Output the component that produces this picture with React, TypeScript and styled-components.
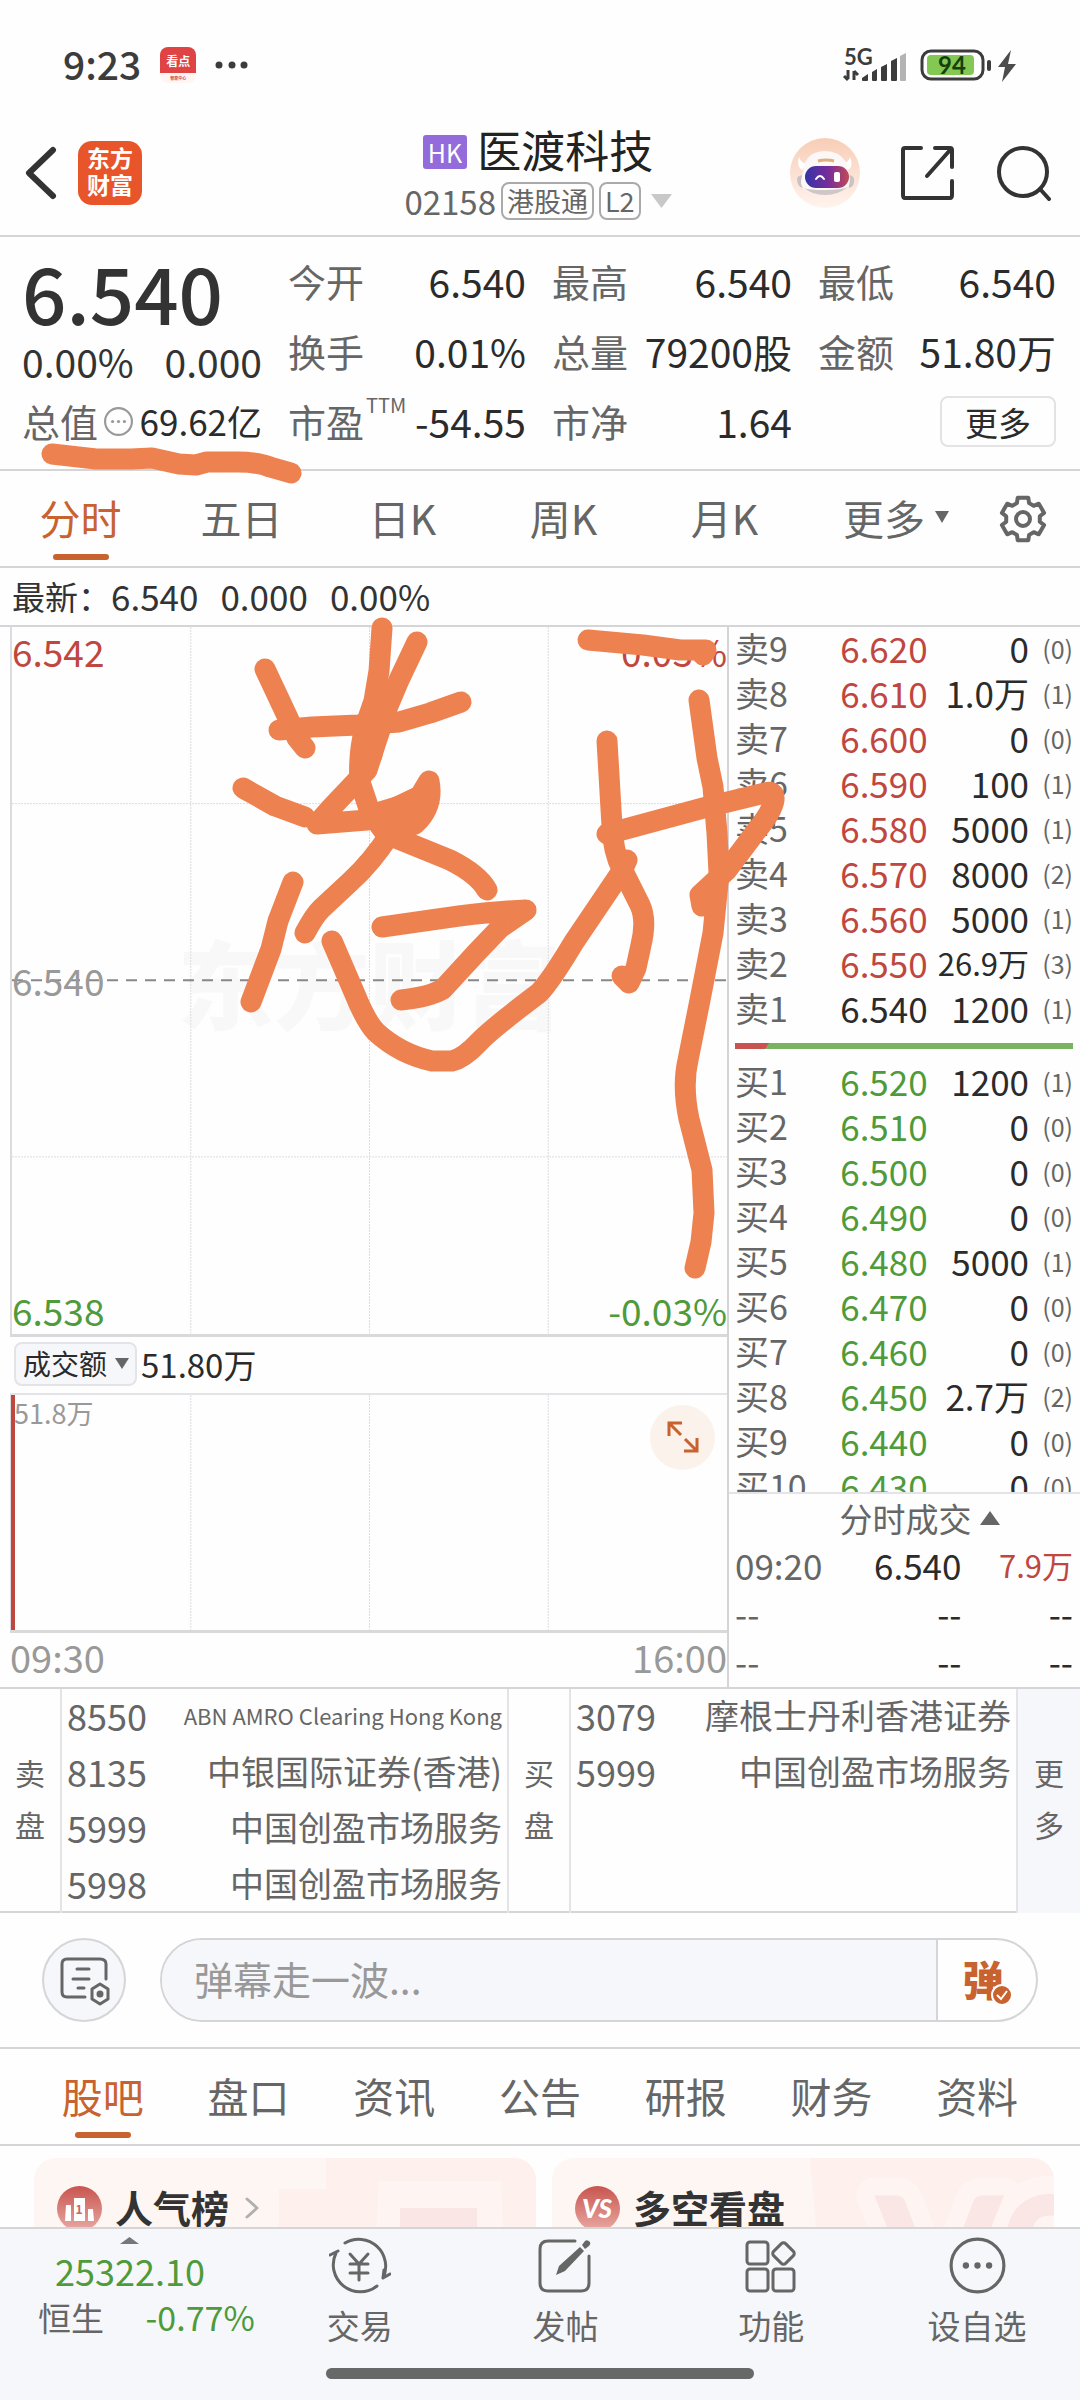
import React from "react";
import styled, { createGlobalStyle, css } from "styled-components";

const color = {
  ink: "#2b2b2b",
  grey: "#666666",
  mute: "#999999",
  line: "#d5d5d8",
  soft: "#e4e4e8",
  panel: "#f6f7fa",
  accent: "#c8622f",
  red: "#bf4740",
  green: "#4f9a3a",
  pen: "#ee8150",
};

const Global = createGlobalStyle`
  *, *::before, *::after { box-sizing: border-box; }
  body {
    margin: 0;
    background: #fefefe;
    color: ${color.ink};
    font-family: "Noto Sans CJK SC", "Noto Sans", sans-serif;
  }
  button, input, select { font: inherit; color: inherit; margin: 0; padding: 0; border: 0; background: none; }
  dl, dd, h1, h2, p { margin: 0; font-weight: 400; }
  table { border-collapse: collapse; width: 100%; table-layout: fixed; }
  td, th { padding: 0 0 4px; font-weight: 400; text-align: left; white-space: nowrap; }
  svg { display: block; flex: none; }
`;

const Page = styled.div`
  position: relative;
  display: flex;
  flex-direction: column;
  height: 100vh;
  min-height: 2400px;
  overflow: hidden;
`;

const Content = styled.main`
  flex: 1;
  min-height: 0;
  overflow: hidden;
`;

/* ---------- status bar ---------- */
const StatusBar = styled.div`
  display: flex;
  justify-content: space-between;
  align-items: center;
  height: 110px;
  padding: 20px 62px 0 63px;
`;
const StatusGroup = styled.div<{ $gap: number }>`
  display: flex;
  align-items: center;
  gap: ${(p) => p.$gap}px;
`;
const Clock = styled.span`
  padding-bottom: 4px;
  font-size: 39px;
  line-height: 44px;
  font-weight: 500;
  color: #3c3c3c;
`;
const NewsBadge = styled.span`
  display: flex;
  flex-direction: column;
  align-items: center;
  width: 36px;
  height: 36px;
  border-radius: 8px;
  overflow: hidden;
  background: linear-gradient(#e04343 0 26px, #fff5f3 26px);
  color: #fff;
  font-size: 12px;
  line-height: 28px;
  font-weight: 700;
`;
const NewsCaption = styled.span`
  font-size: 4px;
  line-height: 6px;
  color: #d04a44;
`;

/* ---------- header ---------- */
const Header = styled.header`
  display: grid;
  grid-template-columns: 1fr auto 1fr;
  align-items: center;
  height: 127px;
  padding: 0 28px 0 24px;
  border-bottom: 2px solid ${color.line};
`;
const HeaderSide = styled.div<{ $end?: boolean }>`
  display: flex;
  align-items: center;
  gap: ${(p) => (p.$end ? 40 : 20)}px;
  justify-content: ${(p) => (p.$end ? "flex-end" : "flex-start")};
`;
const IconButton = styled.button`
  display: flex;
  align-items: center;
  justify-content: center;
  cursor: pointer;
`;
const Brand = styled.a`
  display: flex;
  align-items: center;
  justify-content: center;
  width: 64px;
  height: 64px;
  border-radius: 14px;
  background: #e8552a;
  color: #fff;
  font-size: 23px;
  line-height: 27px;
  font-weight: 700;
  text-align: center;
  text-decoration: none;
  word-break: break-all;
  padding: 0 9px 4px;
`;
const TitleBlock = styled.div`
  display: flex;
  flex-direction: column;
  align-items: center;
  gap: 4px;
`;
const TitleRow = styled.div`
  display: flex;
  align-items: center;
  gap: 10px;
`;
const MarketBadge = styled.span`
  margin-top: 6px;
  padding: 0 5px;
  border-radius: 3px;
  background: #946bdb;
  color: #fff;
  font-size: 25px;
  line-height: 34px;
`;
const StockName = styled.h1`
  font-size: 44px;
  line-height: 52px;
  color: #222;
`;
const CodeRow = styled.div`
  display: flex;
  align-items: center;
  gap: 5px;
  color: ${color.grey};
  font-size: 33px;
  line-height: 44px;
`;
const CodeCaret = styled.span`
  padding-left: 5px;
`;
const Tag = styled.span`
  padding: 0 4px;
  border: 2px solid #aaa;
  border-radius: 8px;
  font-size: 27px;
  line-height: 34px;
`;

/* ---------- quote ---------- */
const Quote = styled.section`
  display: grid;
  grid-template-columns: 240fr 238fr 240fr 238fr;
  column-gap: 26px;
  height: 234px;
  padding: 9px 24px 0 22px;
  border-bottom: 2px solid ${color.line};
`;
const PriceColumn = styled.div`
  display: flex;
  flex-direction: column;
`;
const LastPrice = styled.p`
  font-size: 78px;
  line-height: 90px;
  font-weight: 500;
  color: #333;
`;
const Change = styled.p`
  display: flex;
  justify-content: space-between;
  font-size: 39px;
  line-height: 50px;
  color: #333;
`;
const StatColumn = styled.dl`
  display: flex;
  flex-direction: column;
`;
const Stat = styled.div`
  display: flex;
  justify-content: space-between;
  align-items: center;
  height: 70px;
  white-space: nowrap;
`;
const StatName = styled.dt`
  display: flex;
  font-size: 38px;
  line-height: 56px;
  color: ${color.grey};
`;
const StatValue = styled.dd`
  font-size: 39px;
  line-height: 56px;
`;
const CapRow = styled.dl`
  display: flex;
  align-items: center;
  justify-content: space-between;
  height: 70px;
  white-space: nowrap;
`;
const CapValue = styled.dd`
  font-size: 35px;
  line-height: 56px;
`;
const Sup = styled.sup`
  font-size: 20px;
  line-height: 24px;
  margin-left: 2px;
`;
const MoreButton = styled.button`
  align-self: flex-end;
  width: 116px;
  height: 51px;
  margin-top: 10px;
  border: 2px solid #e3e3e6;
  border-radius: 8px;
  font-size: 33px;
  line-height: 40px;
`;

/* ---------- tabs ---------- */
const PeriodTabs = styled.nav`
  display: grid;
  grid-template-columns: repeat(5, 161fr) 182fr 93fr;
  height: 97px;
  border-bottom: 2px solid ${color.line};
`;
const SectionTabs = styled(PeriodTabs)`
  grid-template-columns: repeat(7, 1fr);
  padding: 0 30px;
`;
const Tab = styled.button<{ $on?: boolean }>`
  position: relative;
  display: flex;
  align-items: center;
  justify-content: center;
  gap: 10px;
  padding-bottom: 4px;
  font-size: 41px;
  line-height: 56px;
  color: ${color.grey};
  white-space: nowrap;
  ${(p) =>
    p.$on &&
    css`
      color: ${color.accent};
      &::after {
        content: "";
        position: absolute;
        bottom: 6px;
        width: 56px;
        height: 6px;
        border-radius: 3px;
        background: ${color.accent};
      }
    `}
`;
const SettingsButton = styled(IconButton)`
  justify-content: flex-start;
  padding-left: 12px;
`;
const Latest = styled.p`
  display: flex;
  gap: 22px;
  height: 59px;
  padding-left: 12px;
  border-bottom: 2px solid ${color.line};
  font-size: 35px;
  line-height: 56px;
  color: #333;
`;
const LatestLabel = styled.span`
  margin-right: -22px;
  font-size: 33px;
`;

/* ---------- market area ---------- */
const Market = styled.section`
  display: grid;
  grid-template-columns: 729fr 351fr;
  border-bottom: 2px solid ${color.line};
`;
const Charts = styled.div`
  display: flex;
  flex-direction: column;
  padding-left: 10px;
  border-right: 2px solid ${color.line};
`;
const Plot = styled.div<{ $grow: number; $edge: string }>`
  position: relative;
  flex: ${(p) => p.$grow} 1 0;
  display: flex;
  flex-direction: column;
  justify-content: space-between;
  border-left: 2px solid ${(p) => p.$edge};
  border-bottom: 3px solid #d9d9dc;
`;
const Canvas = styled.svg`
  position: absolute;
  inset: 0;
  width: 100%;
  height: 100%;
`;
const Watermark = styled.span`
  position: absolute;
  inset: 0;
  display: flex;
  align-items: center;
  justify-content: center;
  font-size: 96px;
  font-weight: 900;
  color: #f8f8f9;
`;
const Scale = styled.div<{ $tone: string }>`
  position: relative;
  display: flex;
  justify-content: space-between;
  font-size: 37px;
  line-height: 48px;
  color: ${(p) => p.$tone};
`;
const VolumeHead = styled.div`
  display: flex;
  align-items: center;
  gap: 4px;
  height: 58px;
  padding: 0 0 2px 4px;
  border-bottom: 2px solid ${color.soft};
  font-size: 33px;
  line-height: 40px;
`;
const PickerLabel = styled.label`
  position: relative;
  display: flex;
  align-items: center;
`;
const Picker = styled.select`
  appearance: none;
  width: 123px;
  height: 44px;
  padding: 0 28px 2px 7px;
  border: 2px solid ${color.soft};
  border-radius: 8px;
  background: ${color.panel};
  font-size: 28px;
  line-height: 38px;
`;
const PickerCaret = styled.svg`
  position: absolute;
  right: 8px;
  pointer-events: none;
`;
const VolumeMax = styled.span`
  position: relative;
  padding-left: 2px;
  font-size: 27px;
  line-height: 36px;
  color: ${color.mute};
`;
const VolumeBar = styled.span`
  position: absolute;
  left: -1px;
  top: 0;
  bottom: 0;
  width: 4px;
  background: ${color.red};
`;
const Expand = styled.button`
  position: absolute;
  top: 10px;
  right: 12px;
  display: flex;
  align-items: center;
  justify-content: center;
  width: 65px;
  height: 65px;
  border-radius: 50%;
  background: #fcf2ec;
`;
const Axis = styled.div`
  display: flex;
  justify-content: space-between;
  height: 54px;
  font-size: 38px;
  line-height: 48px;
  color: ${color.mute};
`;

/* ---------- order book ---------- */
const Book = styled.div`
  padding: 0 7px 0 6px;
`;
const BookTable = styled.table`
  & tr { height: 45px; }
`;
const Clip = styled.div`
  height: 432px;
  overflow: hidden;
`;
const Level = styled.th`
  width: 26%;
  font-size: 34px;
  line-height: 40px;
  color: ${color.grey};
`;
const Num = styled.td<{ $tone?: string; $w: number; $long?: boolean }>`
  && { text-align: right; }
  width: ${(p) => p.$w}%;
  font-size: ${(p) => (p.$long ? 31 : 35)}px;
  line-height: 40px;
  color: ${(p) => p.$tone ?? color.ink};
`;
const Count = styled.td`
  && { text-align: right; }
  width: 13%;
  font-size: 25px;
  line-height: 40px;
  color: ${color.grey};
`;
const Balance = styled.div`
  height: 6px;
  margin: 11px 0;
  background: linear-gradient(125deg, #c75450 0 10%, #7ab35f 10%);
`;
const TradesToggle = styled.button`
  display: flex;
  align-items: center;
  justify-content: center;
  gap: 8px;
  width: calc(100% + 13px);
  height: 51px;
  margin: 0 -7px 0 -6px;
  padding: 0 0 2px 30px;
  border-top: 2px solid ${color.soft};
  font-size: 33px;
  line-height: 40px;
  color: ${color.grey};
`;
const TradeTable = styled.table`
  & tr { height: 48px; }
`;
const TradeTime = styled.td`
  width: 34%;
  font-size: 35px;
  line-height: 40px;
  color: ${color.grey};
`;

/* ---------- broker queue ---------- */
const Brokers = styled.section`
  display: grid;
  grid-template-columns: 62fr 447fr 62fr 447fr 62fr;
  height: 224px;
  border-bottom: 2px solid ${color.line};
`;
const Side = styled.div`
  display: flex;
  align-items: center;
  justify-content: center;
  padding: 0 15px 6px;
  border-right: 2px solid ${color.soft};
  font-size: 30px;
  line-height: 52px;
  color: ${color.grey};
`;
const MoreSide = styled.button`
  padding: 0 15px 6px;
  background: ${color.panel};
  font-size: 30px;
  line-height: 52px;
  color: ${color.grey};
`;
const BrokerPane = styled.div`
  padding: 0 5px;
  border-right: 2px solid ${color.soft};
`;
const BrokerTable = styled.table`
  & tr { height: 56px; }
`;
const BrokerCode = styled.th`
  width: 86px;
  font-size: 36px;
  line-height: 48px;
  color: ${color.grey};
`;
const BrokerName = styled.td<{ $small?: boolean }>`
  && { text-align: right; }
  font-size: ${(p) => (p.$small ? 22 : 34)}px;
  line-height: 48px;
  color: ${color.grey};
`;

/* ---------- comment bar ---------- */
const CommentBar = styled.form`
  display: flex;
  align-items: center;
  gap: 34px;
  height: 136px;
  padding: 0 42px;
  border-bottom: 2px solid ${color.line};
`;
const RoundButton = styled(IconButton)`
  flex: none;
  width: 84px;
  height: 84px;
  border: 2px solid ${color.line};
  border-radius: 50%;
  background: ${color.panel};
`;
const CommentField = styled.div`
  flex: 1;
  display: flex;
  height: 84px;
  border: 2px solid ${color.line};
  border-radius: 42px;
  overflow: hidden;
`;
const CommentInput = styled.input`
  flex: 1;
  min-width: 0;
  padding: 0 0 4px 32px;
  background: ${color.panel};
  font-size: 39px;
  &::placeholder { color: ${color.mute}; opacity: 1; }
`;
const BarrageButton = styled.button`
  position: relative;
  width: 100px;
  padding: 0 8px 4px 0;
  border-left: 2px solid ${color.line};
  color: ${color.accent};
  font-size: 41px;
  line-height: 72px;
  font-weight: 900;
  & svg { position: absolute; right: 23px; bottom: 14px; }
`;

/* ---------- cards ---------- */
const Cards = styled.section`
  display: grid;
  grid-template-columns: 1fr 1fr;
  gap: 16px;
  padding: 12px 26px 0 34px;
`;
const Card = styled.article`
  position: relative;
  display: flex;
  align-items: flex-start;
  gap: 13px;
  height: 160px;
  padding: 28px 23px;
  border-radius: 22px;
  overflow: hidden;
  background: #fef6f3;
`;
const CardArt = styled.svg`
  position: absolute;
  right: 0;
  top: 0;
`;
const CardTitle = styled.h2`
  font-size: 38px;
  line-height: 42px;
  font-weight: 700;
  color: #333;
`;
const CardArrow = styled.svg`
  margin: 11px 0 0 3px;
`;

/* ---------- bottom bar ---------- */
const BottomBar = styled.footer`
  height: 173px;
  border-top: 2px solid ${color.line};
  background: ${color.panel};
`;
const BottomNav = styled.nav`
  display: grid;
  grid-template-columns: 257fr repeat(4, 206fr);
  height: 139px;
`;
const IndexLink = styled.a`
  display: flex;
  flex-direction: column;
  padding: 8px 2px 0 38px;
  text-decoration: none;
  color: ${color.green};
`;
const IndexCaret = styled.span`
  padding-left: 82px;
`;
const IndexValue = styled.span`
  padding-left: 17px;
  font-size: 36px;
  line-height: 52px;
`;
const IndexRow = styled.span`
  display: flex;
  justify-content: space-between;
  font-size: 34px;
  line-height: 42px;
`;
const IndexName = styled.span`
  font-size: 33px;
  color: ${color.grey};
`;
const NavItem = styled.a`
  display: flex;
  flex-direction: column;
  align-items: center;
  gap: 8px;
  padding-top: 8px;
  text-decoration: none;
  color: ${color.grey};
  font-size: 33px;
  line-height: 46px;
`;
const HomeBar = styled.div`
  width: 428px;
  height: 11px;
  margin: 0 auto;
  border-radius: 6px;
  background: #676968;
`;

const Markup = styled.svg`
  position: absolute;
  left: 0;
  top: 0;
  width: 100%;
  pointer-events: none;
`;

/* ---------- drawings ---------- */
const Caret = ({ w, h, fill, up }: { w: number; h: number; fill: string; up?: boolean }) => (
  <svg width={w} height={h} aria-hidden="true">
    <path d={up ? `M0 ${h}L${w / 2} 0L${w} ${h}Z` : `M0 0H${w}L${w / 2} ${h}Z`} fill={fill} />
  </svg>
);

const Signal = () => (
  <svg width="64" height="34" viewBox="0 0 64 34" aria-hidden="true">
    <text x="1" y="17" fontSize="22" fontWeight="700" fontFamily="Lato, sans-serif" fill="#3c3c3c">5G</text>
    <path d="M5 22v9M1 28l4 4M11 32v-9M11 23l4 4" stroke="#3c3c3c" strokeWidth="3" fill="none" />
    <path d="M19 30l6-4v6q0 1-1 1h-4q-1 0-1-1zM29 24l5-3v11q0 1-1 1h-3q-1 0-1-1zM38 19l6-3v16q0 1-1 1h-4q-1 0-1-1zM48 13l6-3v22q0 1-1 1h-4q-1 0-1-1z" fill="#3c3c3c" />
    <path d="M57 8l6-3v27q0 1-1 1h-4q-1 0-1-1z" fill="#b3b3b3" />
  </svg>
);

const Battery = () => (
  <svg width="98" height="34" viewBox="0 0 98 34" aria-hidden="true">
    <rect x="2" y="3" width="61" height="28" rx="9" fill="none" stroke="#3c3c3c" strokeWidth="3" />
    <rect x="7" y="7" width="47" height="20" rx="4" fill="#82c852" />
    <text x="32" y="26" fontSize="24" fontWeight="700" textAnchor="middle" fontFamily="Lato, sans-serif" fill="#15400a">94</text>
    <rect x="67" y="12" width="4" height="11" rx="2" fill="#3c3c3c" />
    <path d="M91 2L78 19h7l-3 15 14-18h-8z" fill="#4c4c4c" />
  </svg>
);

const Back = () => (
  <svg width="34" height="54" viewBox="0 0 34 54" aria-hidden="true">
    <path d="M29 4L5 27l24 23" fill="none" stroke="#333" strokeWidth="6" strokeLinecap="round" strokeLinejoin="round" />
  </svg>
);

const Robot = () => (
  <svg width="70" height="70" viewBox="0 0 70 70" aria-hidden="true">
    <defs>
      <linearGradient id="halo" x1="0" y1="0" x2="0" y2="1">
        <stop offset="0" stopColor="#f8cdb6" />
        <stop offset="1" stopColor="#fff4ee" />
      </linearGradient>
      <linearGradient id="visor">
        <stop offset="0" stopColor="#3434a8" />
        <stop offset=".55" stopColor="#7a2c98" />
        <stop offset="1" stopColor="#c04a56" />
      </linearGradient>
    </defs>
    <circle cx="35" cy="35" r="35" fill="url(#halo)" />
    <path d="M9 19q2 6 8 7l-5 6q-6-4-3-13zM60 19q-1 5-7 7l5 6q6-4 2-13z" fill="#fff" />
    <path d="M7 40q3-4 6-2v12q-6-1-6-10zM64 40q-3-4-5-2v12q6-1 5-10z" fill="#c9c3c4" />
    <path d="M15 24Q21 13 35 13t21 11l4 17q0 15-25 15T11 43z" fill="#fbf8f7" />
    <path d="M14 50q8 7 21 7t23-8q-6 3-23 3t-21-2z" fill="#cfc6c8" />
    <rect x="15" y="28" width="44" height="22" rx="11" fill="url(#visor)" />
    <path d="M26 41q4-6 8 0" fill="none" stroke="#fff" strokeWidth="2" strokeLinecap="round" />
    <rect x="44" y="34" width="6" height="10" rx="2" fill="#fff" />
    <path d="M28 23q8-2 16 0" stroke="#dfb07a" strokeWidth="3" fill="none" />
  </svg>
);

const Share = () => (
  <svg width="56" height="56" viewBox="0 0 56 56" fill="none" stroke="#333" strokeWidth="4" strokeLinecap="round" strokeLinejoin="round" aria-hidden="true">
    <path d="M21 3H5q-2 0-2 2v45q0 3 2 3h45q2 0 2-3V36M35 3h15q2 0 2 2v17M51 4L27 31" />
  </svg>
);

const Search = () => (
  <svg width="56" height="56" viewBox="0 0 56 56" fill="none" stroke="#333" strokeWidth="4" strokeLinecap="round" aria-hidden="true">
    <circle cx="27" cy="27" r="24" />
    <path d="M44 44l9 10" />
  </svg>
);

const gearPath = (() => {
  const points: string[] = [];
  for (let k = 0; k < 6; k++) {
    [[17, -21], [22, -14], [22, 14], [17, 21]].forEach(([r, a]) => {
      const t = ((k * 60 - 90 + a) * Math.PI) / 180;
      points.push(`${(24 + r * Math.cos(t)).toFixed(1)} ${(24 + r * Math.sin(t)).toFixed(1)}`);
    });
  }
  return `M${points.join("L")}Z`;
})();

const Gear = () => (
  <svg width="48" height="48" viewBox="0 0 48 48" fill="none" stroke="#666" strokeWidth="4" strokeLinejoin="round" aria-hidden="true">
    <path d={gearPath} />
    <circle cx="24" cy="24" r="7" />
  </svg>
);

const Dots = ({ size, stroke, tone }: { size: number; stroke: number; tone: string }) => (
  <svg width={size} height={size} viewBox="0 0 54 54" aria-hidden="true">
    <circle cx="27" cy="27" r="25" fill="none" stroke={tone} strokeWidth={stroke} />
    {[16, 27, 38].map((x) => <circle key={x} cx={x} cy="27" r="3" fill={tone} />)}
  </svg>
);

const PanelIcon = () => (
  <svg width="52" height="52" viewBox="0 0 52 52" fill="none" stroke="#666" strokeWidth="3" strokeLinejoin="round" strokeLinecap="round" aria-hidden="true">
    <path d="M27 43H9q-5 0-5-5V10q0-5 5-5h33q6 0 6 5v15M19 15h12M15 25h16M20 34h6" />
    <path d="M42 30l8 5v10l-8 5-8-5V35z" />
    <circle cx="42" cy="40" r="2" fill="#666" />
  </svg>
);

const TradeIcon = () => (
  <svg width="62" height="57" viewBox="0 0 62 57" fill="none" stroke="#666" strokeWidth="3" strokeLinecap="round" strokeLinejoin="round" aria-hidden="true">
    <path d="M16 6A27 27 0 0 1 54 41M54 41l7-4M54 41l1-8M48 49A27 27 0 0 1 7 16M9 14l-8 4" />
    <path d="M21 17l9 10 9-10M30 27v16M21 27h18M21 36h18" />
  </svg>
);

const PostIcon = () => (
  <svg width="54" height="57" viewBox="0 0 54 57" aria-hidden="true">
    <path d="M37 4H10q-8 0-8 8v34q0 8 8 8h33q8 0 8-8V19" fill="none" stroke="#666" strokeWidth="3" strokeLinecap="round" />
    <path d="M18 38l3-9 21-19 4 4-19 20zM44 8l3-4q2-2 5 1 1 2-1 4l-4 3z" fill="#666" />
  </svg>
);

const GridIcon = () => (
  <svg width="54" height="57" viewBox="0 0 54 57" fill="none" stroke="#666" strokeWidth="3" aria-hidden="true">
    <rect x="3" y="5" width="21" height="22" rx="3" />
    <rect x="3" y="32" width="21" height="22" rx="3" />
    <rect x="29" y="32" width="21" height="22" rx="3" />
    <rect x="31" y="8" width="17" height="17" rx="3" transform="rotate(45 39.500 16.500)" />
  </svg>
);

const RedDisc = ({ children }: { children: React.ReactNode }) => (
  <svg width="45" height="45" viewBox="0 0 45 45" aria-hidden="true">
    <defs>
      <linearGradient id="disc" x1="0" y1="0" x2="0" y2="1">
        <stop offset="0" stopColor="#c9544f" />
        <stop offset="1" stopColor="#e8aaa3" />
      </linearGradient>
    </defs>
    <circle cx="22.500" cy="22.500" r="22.500" fill="url(#disc)" />
    {children}
  </svg>
);

/* ---------- data ---------- */
type Quoted = [level: string, price: string, size: string, orders: string];
const asks: Quoted[] = [
  ["卖9", "6.620", "0", "(0)"],
  ["卖8", "6.610", "1.0万", "(1)"],
  ["卖7", "6.600", "0", "(0)"],
  ["卖6", "6.590", "100", "(1)"],
  ["卖5", "6.580", "5000", "(1)"],
  ["卖4", "6.570", "8000", "(2)"],
  ["卖3", "6.560", "5000", "(1)"],
  ["卖2", "6.550", "26.9万", "(3)"],
  ["卖1", "6.540", "1200", "(1)"],
];
const bids: Quoted[] = [
  ["买1", "6.520", "1200", "(1)"],
  ["买2", "6.510", "0", "(0)"],
  ["买3", "6.500", "0", "(0)"],
  ["买4", "6.490", "0", "(0)"],
  ["买5", "6.480", "5000", "(1)"],
  ["买6", "6.470", "0", "(0)"],
  ["买7", "6.460", "0", "(0)"],
  ["买8", "6.450", "2.7万", "(2)"],
  ["买9", "6.440", "0", "(0)"],
  ["买10", "6.430", "0", "(0)"],
];
const trades = [
  ["09:20", "6.540", "7.9万"],
  ["--", "--", "--"],
  ["--", "--", "--"],
];
const sellers = [
  ["8550", "ABN AMRO Clearing Hong Kong"],
  ["8135", "中银国际证券(香港)"],
  ["5999", "中国创盈市场服务"],
  ["5998", "中国创盈市场服务"],
];
const buyers = [
  ["3079", "摩根士丹利香港证券"],
  ["5999", "中国创盈市场服务"],
];
const penStrokes = [
  "M52 454L96 459L131 459L152 458L179 464L196 465L207 462L238 462Q258 462 270 467L291 473",
  "M382 628L379 671L374 701L365 727Q358 756 360 782L370 812L386 834L450 860Q478 874 487 890",
  "M417 642L399 680L388 706L376 742L367 770L331 808L317 824L367 820L395 808L420 796L429 781Q434 806 415 824L390 834Q372 862 350 882L321 909Q314 916 305 933",
  "M380 812L420 800L424 808L392 824Z",
  "M367 730L372 755L364 770Z",
  "M265 669L288 718L297 738L305 748",
  "M279 730L312 727L358 725L399 722L430 713L461 702",
  "M243 788L275 806L305 817",
  "M293 882L278 921L271 949L251 1002",
  "M382 927L459 916Q500 911 526 910L500 928L477 952L443 989Q430 997 401 1000",
  "M332 941L354 992Q366 1022 376 1032Q400 1054 432 1061L452 1061Q464 1058 478 1043Q490 1030 539 993Q550 982 574 942L622 871L627 860",
  "M607 741L612 826Q613 852 622 869L640 905Q647 920 641 945L636 968L629 983L622 976",
  "M607 834L707 807L765 793Q775 790 774 800Q772 812 757 830L727 870L700 895L702 906",
  "M699 700L707 758L713 787L717 833L719 873L713 933L700 1000L688 1060Q682 1086 689 1119L702 1170L704 1213L701 1242L695 1268",
  "M588 640L643 645L680 650L706 650L703 655",
];

const BookRows = ({ rows, tone }: { rows: Quoted[]; tone: string }) => (
  <BookTable>
    <tbody>
      {rows.map(([level, price, size, orders]) => (
        <tr key={level}>
          <Level scope="row">{level}</Level>
          <Num $w={31} $tone={price === "6.540" ? color.ink : tone}>{price}</Num>
          <Num $w={30} $long={size.length > 4}>{size}</Num>
          <Count>{orders}</Count>
        </tr>
      ))}
    </tbody>
  </BookTable>
);

const BrokerList = ({ rows }: { rows: string[][] }) => (
  <BrokerPane>
    <BrokerTable>
      <tbody>
        {rows.map(([code, name]) => (
          <tr key={code}>
            <BrokerCode scope="row">{code}</BrokerCode>
            <BrokerName $small={name.startsWith("ABN")}>{name}</BrokerName>
          </tr>
        ))}
      </tbody>
    </BrokerTable>
  </BrokerPane>
);

const Columns = () => (
  <>
    {["25%", "50%", "75%"].map((x) => (
      <line key={x} x1={x} x2={x} y1="0" y2="100%" stroke="#dcdce0" strokeWidth="1" strokeDasharray="2 1" />
    ))}
  </>
);

export default function App() {
  return (
    <Page>
      <Global />
      <StatusBar>
        <StatusGroup $gap={19}>
          <Clock>9:23</Clock>
          <NewsBadge>看点<NewsCaption>智能中心</NewsCaption></NewsBadge>
          <svg width="34" height="8" aria-hidden="true">
            {[4, 17, 29].map((x) => <circle key={x} cx={x} cy="4" r="3.500" fill="#3c3c3c" />)}
          </svg>
        </StatusGroup>
        <StatusGroup $gap={13}>
          <Signal />
          <Battery />
        </StatusGroup>
      </StatusBar>

      <Header>
        <HeaderSide>
          <IconButton aria-label="返回"><Back /></IconButton>
          <Brand href="#home">东方财富</Brand>
        </HeaderSide>
        <TitleBlock>
          <TitleRow>
            <MarketBadge>HK</MarketBadge>
            <StockName>医渡科技</StockName>
          </TitleRow>
          <CodeRow>
            02158
            <Tag>港股通</Tag>
            <Tag>L2</Tag>
            <CodeCaret><Caret w={21} h={14} fill="#c8c8c8" /></CodeCaret>
          </CodeRow>
        </TitleBlock>
        <HeaderSide $end>
          <IconButton aria-label="助手"><Robot /></IconButton>
          <IconButton aria-label="分享"><Share /></IconButton>
          <IconButton aria-label="搜索"><Search /></IconButton>
        </HeaderSide>
      </Header>

      <Content>
        <Quote>
          <PriceColumn>
            <LastPrice>6.540</LastPrice>
            <Change><span>0.00%</span><span>0.000</span></Change>
            <CapRow>
              <StatName>总值</StatName>
              <Dots size={29} stroke={4} tone="#999" />
              <CapValue>69.62亿</CapValue>
            </CapRow>
          </PriceColumn>
          <StatColumn>
            <Stat><StatName>今开</StatName><StatValue>6.540</StatValue></Stat>
            <Stat><StatName>换手</StatName><StatValue>0.01%</StatValue></Stat>
            <Stat><StatName>市盈<Sup>TTM</Sup></StatName><StatValue>-54.55</StatValue></Stat>
          </StatColumn>
          <StatColumn>
            <Stat><StatName>最高</StatName><StatValue>6.540</StatValue></Stat>
            <Stat><StatName>总量</StatName><StatValue>79200股</StatValue></Stat>
            <Stat><StatName>市净</StatName><StatValue>1.64</StatValue></Stat>
          </StatColumn>
          <PriceColumn>
            <StatColumn>
              <Stat><StatName>最低</StatName><StatValue>6.540</StatValue></Stat>
              <Stat><StatName>金额</StatName><StatValue>51.80万</StatValue></Stat>
            </StatColumn>
            <MoreButton>更多</MoreButton>
          </PriceColumn>
        </Quote>

        <PeriodTabs>
          <Tab $on>分时</Tab>
          <Tab>五日</Tab>
          <Tab>日K</Tab>
          <Tab>周K</Tab>
          <Tab>月K</Tab>
          <Tab>更多<Caret w={14} h={12} fill="#666" /></Tab>
          <SettingsButton aria-label="设置"><Gear /></SettingsButton>
        </PeriodTabs>

        <Latest>
          <LatestLabel>最新：</LatestLabel>
          <span>6.540</span>
          <span>0.000</span>
          <span>0.00%</span>
        </Latest>

        <Market>
          <Charts>
            <Plot $grow={3} $edge="#dcdce0">
              <Watermark>东方财富</Watermark>
              <Canvas aria-hidden="true">
                <Columns />
                {["25%", "75%"].map((y) => (
                  <line key={y} x1="0" x2="100%" y1={y} y2={y} stroke="#dcdce0" strokeDasharray="2 1" />
                ))}
                <line x1="0" x2="100%" y1="50%" y2="50%" stroke="#888" strokeWidth="2" strokeDasharray="11 8" />
              </Canvas>
              <Scale $tone={color.red}><span>6.542</span><span>0.03%</span></Scale>
              <Scale $tone={color.mute}><span>6.540</span></Scale>
              <Scale $tone={color.green}><span>6.538</span><span>-0.03%</span></Scale>
            </Plot>
            <VolumeHead>
              <PickerLabel>
                <Picker aria-label="指标" defaultValue="amount">
                  <option value="amount">成交额</option>
                  <option value="volume">成交量</option>
                </Picker>
                <PickerCaret width="14" height="11" aria-hidden="true"><path d="M0 0H14L7 11Z" fill="#666" /></PickerCaret>
              </PickerLabel>
              <span>51.80万</span>
            </VolumeHead>
            <Plot $grow={1} $edge="#dcdce0">
              <Canvas aria-hidden="true"><Columns /></Canvas>
              <VolumeBar />
              <VolumeMax>51.8万</VolumeMax>
              <Expand aria-label="全屏">
                <svg width="34" height="34" viewBox="0 0 34 34" fill="none" stroke={color.accent} strokeWidth="3" aria-hidden="true">
                  <path d="M3 16V3h13M4 4l11 11M31 18v13H18M30 30L19 19" />
                </svg>
              </Expand>
            </Plot>
            <Axis><span>09:30</span><span>16:00</span></Axis>
          </Charts>

          <Book>
            <BookRows rows={asks} tone={color.red} />
            <Balance />
            <Clip><BookRows rows={bids} tone={color.green} /></Clip>
            <TradesToggle>分时成交<Caret w={20} h={14} fill="#666" up /></TradesToggle>
            <TradeTable>
              <tbody>
                {trades.map(([time, price, size], i) => (
                  <tr key={i}>
                    <TradeTime>{time}</TradeTime>
                    <Num $w={33}>{price}</Num>
                    <Num $w={33} $long={i === 0} $tone={i === 0 ? color.red : undefined}>{size}</Num>
                  </tr>
                ))}
              </tbody>
            </TradeTable>
          </Book>
        </Market>

        <Brokers>
          <Side>卖盘</Side>
          <BrokerList rows={sellers} />
          <Side>买盘</Side>
          <BrokerList rows={buyers} />
          <MoreSide>更多</MoreSide>
        </Brokers>

        <CommentBar onSubmit={(e) => e.preventDefault()}>
          <RoundButton type="button" aria-label="弹幕设置"><PanelIcon /></RoundButton>
          <CommentField>
            <CommentInput aria-label="弹幕" placeholder="弹幕走一波..." />
            <BarrageButton type="button">
              弹
              <svg width="22" height="22" viewBox="0 0 22 22" aria-hidden="true">
                <circle cx="11" cy="11" r="10" fill={color.accent} stroke="#fff" strokeWidth="2" />
                <path d="M6 11l4 4 6-8" fill="none" stroke="#fff" strokeWidth="2" />
              </svg>
            </BarrageButton>
          </CommentField>
        </CommentBar>

        <SectionTabs>
          {["股吧", "盘口", "资讯", "公告", "研报", "财务", "资料"].map((name, i) => (
            <Tab key={name} $on={i === 0}>{name}</Tab>
          ))}
        </SectionTabs>

        <Cards>
          <Card>
            <CardArt width="257" height="160" viewBox="0 0 257 160" aria-hidden="true">
              <path d="M47 0H257V160H0V31H47Z" fill="#fdf0ed" />
              <path d="M100 23H222L228 160H92Z" fill="#fef5f2" />
              <rect x="121" y="50" width="77" height="110" fill="#fae6e4" />
            </CardArt>
            <RedDisc>
              <path d="M9 19h5v16H8zM17 12h11v23H17zM31 23h5l1 12h-6z" fill="#fff" />
              <text x="22" y="28" fontSize="12" fontWeight="700" textAnchor="middle" fill="#cf6560">1</text>
            </RedDisc>
            <CardTitle>人气榜</CardTitle>
            <CardArrow width="14" height="22" aria-hidden="true">
              <path d="M2 2l10 9-10 9" fill="none" stroke="#b0b0b0" strokeWidth="3" strokeLinecap="round" strokeLinejoin="round" />
            </CardArrow>
          </Card>
          <Card>
            <CardArt width="244" height="160" viewBox="0 0 244 160" aria-hidden="true">
              <path d="M0 0H244V160H14Z" fill="#fdf0ed" />
              <text x="66" y="168" fontSize="180" fontWeight="900" fontFamily="Lato, sans-serif" fill="#fae6e4" stroke="#fef5f2" strokeWidth="36" strokeLinejoin="round" paintOrder="stroke">VS</text>
            </CardArt>
            <RedDisc>
              <text x="22" y="32" fontSize="26" fontWeight="900" fontStyle="italic" fontFamily="Lato, sans-serif" textAnchor="middle" fill="#fff">VS</text>
            </RedDisc>
            <CardTitle>多空看盘</CardTitle>
          </Card>
        </Cards>
      </Content>

      <BottomBar>
        <BottomNav>
          <IndexLink href="#index">
            <IndexCaret><Caret w={19} h={7} fill="#76777a" up /></IndexCaret>
            <IndexValue>25322.10</IndexValue>
            <IndexRow><IndexName>恒生</IndexName><span>-0.77%</span></IndexRow>
          </IndexLink>
          <NavItem href="#trade"><TradeIcon />交易</NavItem>
          <NavItem href="#post"><PostIcon />发帖</NavItem>
          <NavItem href="#tools"><GridIcon />功能</NavItem>
          <NavItem href="#watch"><Dots size={57} stroke={3} tone="#666" />设自选</NavItem>
        </BottomNav>
        <HomeBar />
      </BottomBar>

      <Markup viewBox="0 0 1080 2400" fill="none" stroke={color.pen} strokeWidth="21" strokeLinecap="round" strokeLinejoin="round" aria-hidden="true">
        {penStrokes.map((d) => <path key={d} d={d} />)}
      </Markup>
    </Page>
  );
}
